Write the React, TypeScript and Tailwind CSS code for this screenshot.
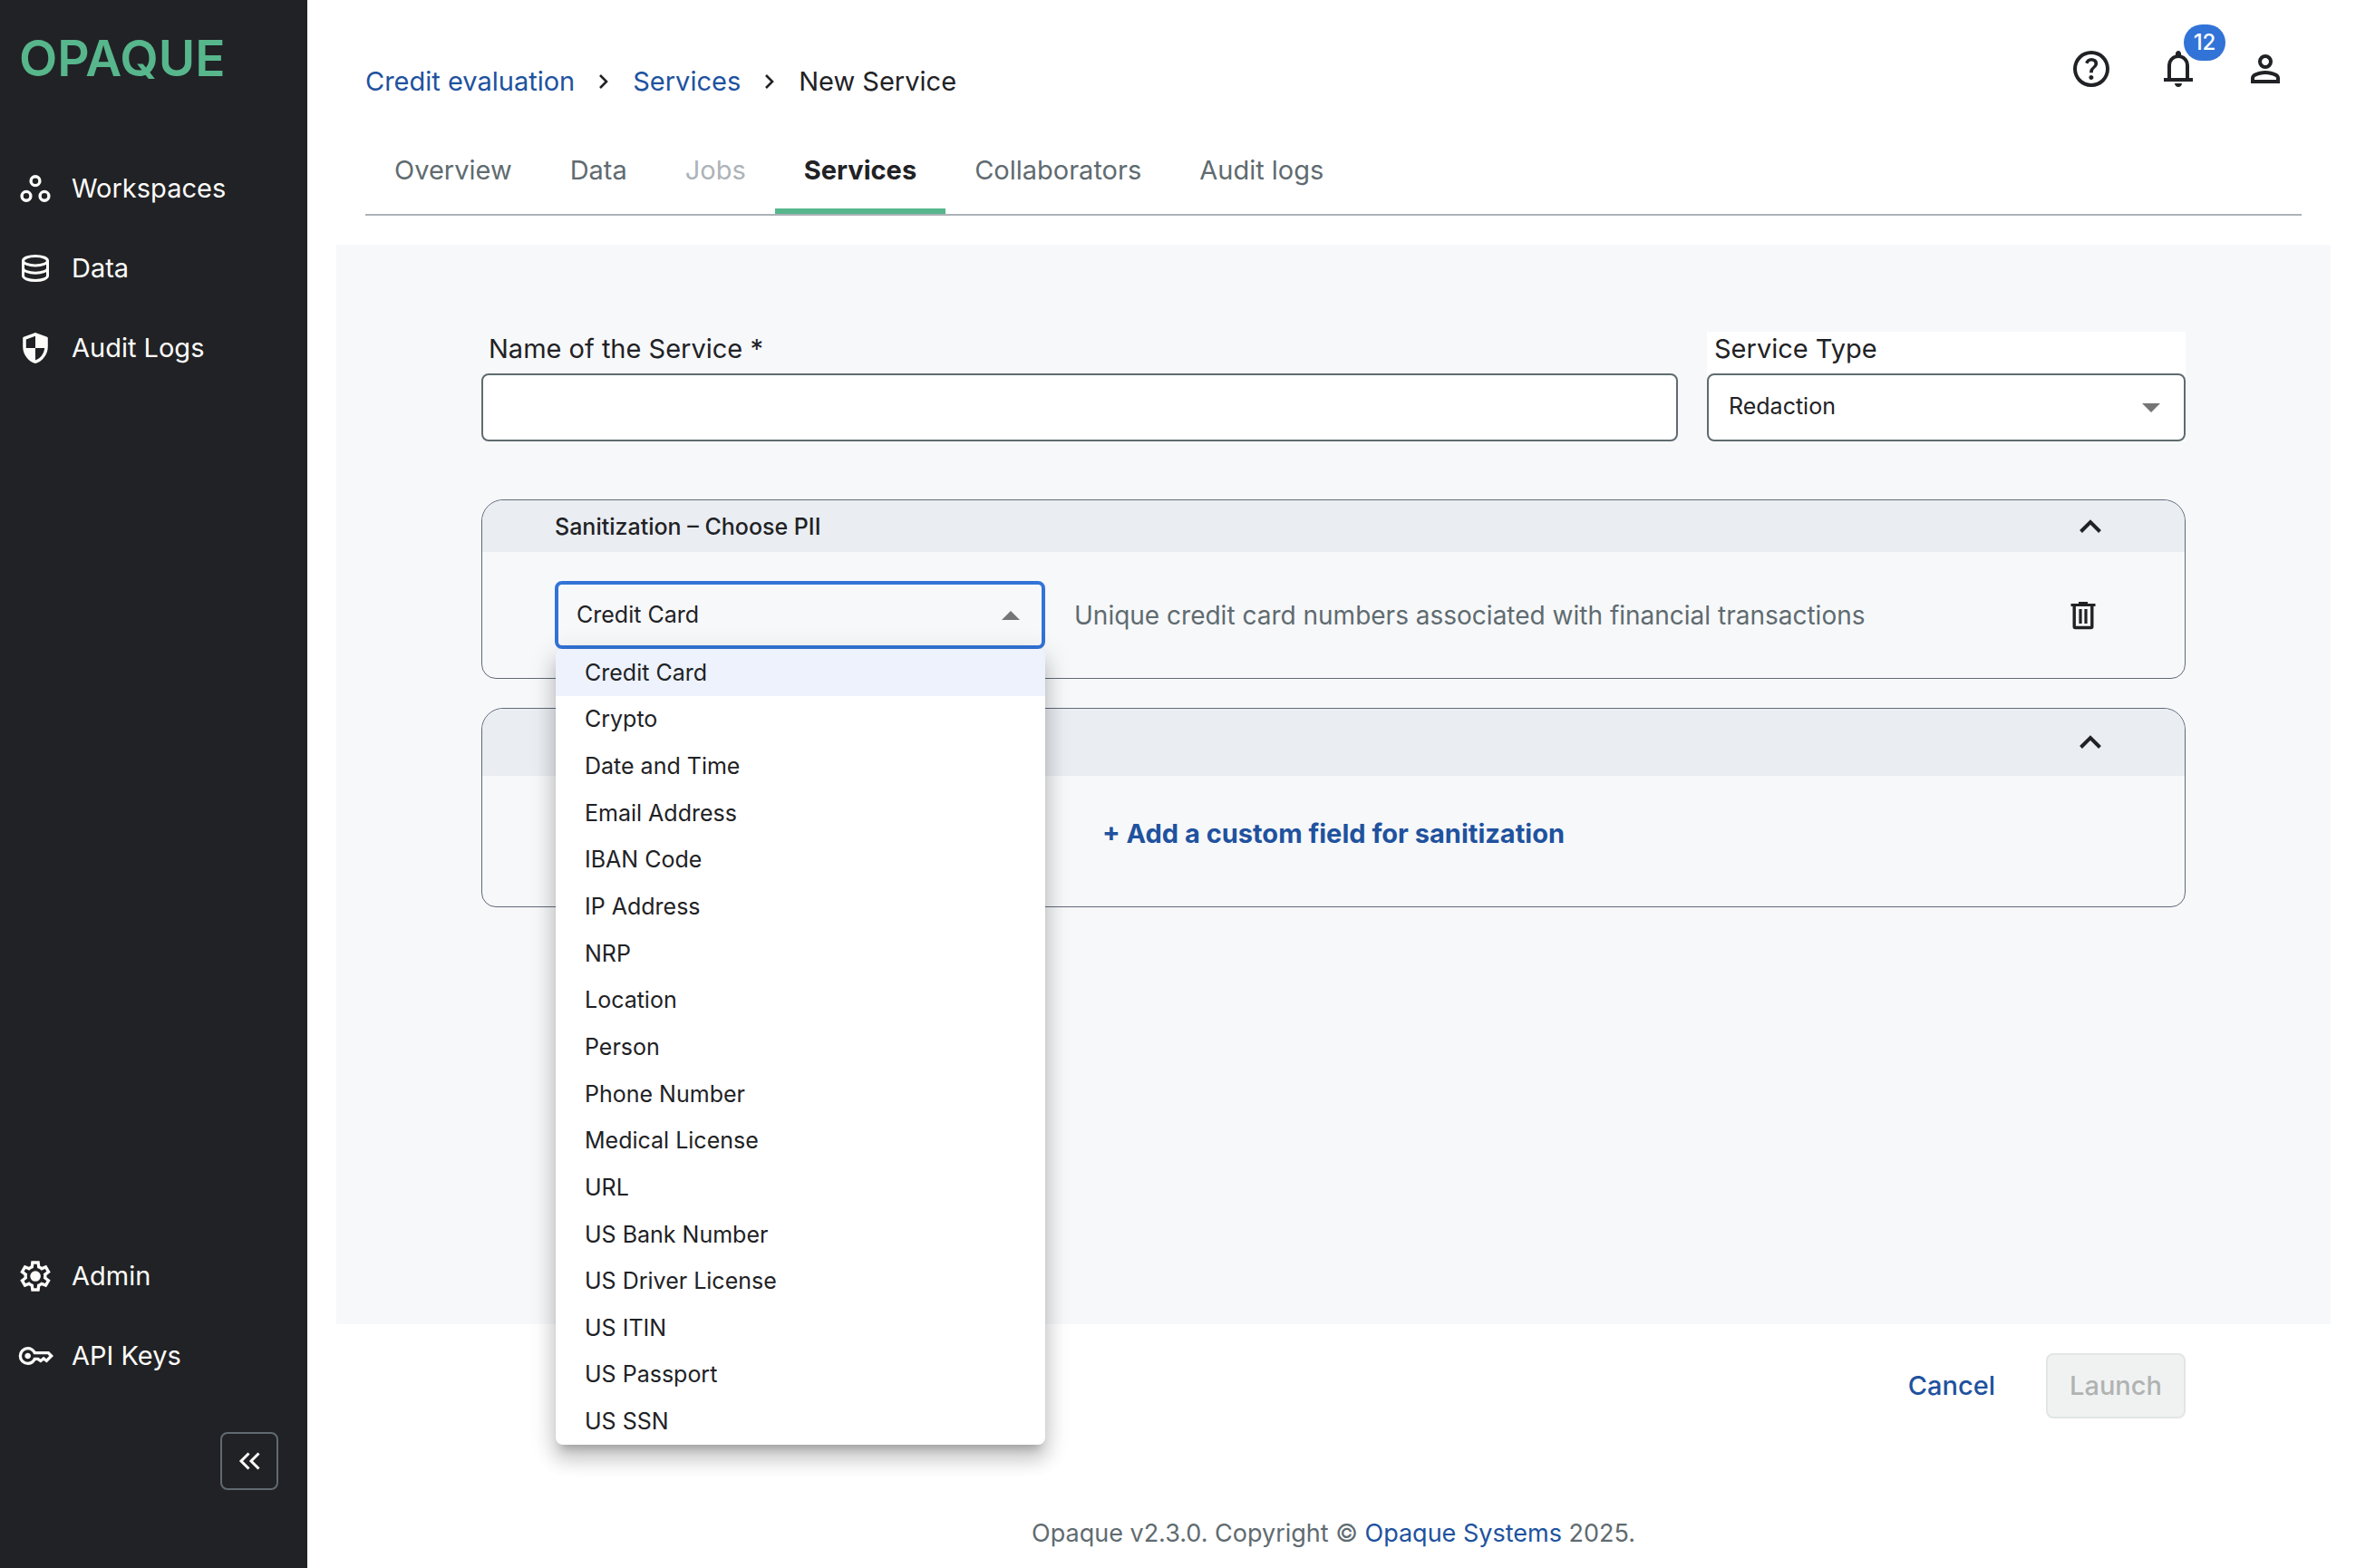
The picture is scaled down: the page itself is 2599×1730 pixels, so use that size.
import { useState } from 'react';
import type { ReactNode } from 'react';

const navItems = ['Workspaces', 'Data', 'Audit Logs'];

const tabs = ['Overview', 'Data', 'Jobs', 'Services', 'Collaborators', 'Audit logs'];

const piiTypes = [
    'Credit Card',
    'Crypto',
    'Date and Time',
    'Email Address',
    'IBAN Code',
    'IP Address',
    'NRP',
    'Location',
    'Person',
    'Phone Number',
    'Medical License',
    'URL',
    'US Bank Number',
    'US Driver License',
    'US ITIN',
    'US Passport',
    'US SSN',
];

// Material Symbols share one 960 unit grid
const symbols = {
    settings:
        'm370-80-16-128q-13-5-24.5-12T307-235l-119 50L78-375l103-78q-1-7-1-13.5v-27q0-6.5 1-13.5L78-585l110-190 119 50q11-8 23-15t24-12l16-128h220l16 128q13 5 24.5 12t22.5 15l119-50 110 190-103 78q1 7 1 13.5v27q0 6.5-2 13.5l103 78-110 190-118-50q-11 8-23 15t-24 12L590-80H370Zm70-80h79l14-106q31-8 57.5-23.5T639-327l99 41 39-68-86-65q5-14 7-29.5t2-31.5q0-16-2-31.5t-7-29.5l86-65-39-68-99 42q-22-23-48.5-38.5T533-694l-13-106h-79l-14 106q-31 8-57.5 23.5T321-633l-99-41-39 68 86 64q-5 15-7 30t-2 32q0 16 2 31t7 30l-86 65 39 68 99-42q22 23 48.5 38.5T427-266l13 106Zm42-180q58 0 99-41t41-99q0-58-41-99t-99-41q-59 0-99.5 41T342-480q0 58 40.5 99t99.5 41Z',
    key: 'M280-400q-33 0-56.5-23.5T200-480q0-33 23.5-56.5T280-560q33 0 56.5 23.5T360-480q0 33-23.5 56.5T280-400Zm0 160q-100 0-170-70T40-480q0-100 70-170t170-70q67 0 121.5 33t86.5 87h352l120 120-180 180-80-60-80 60-85-60h-47q-32 54-86.5 87T280-240Zm0-80q56 0 98.5-34t56.5-86h125l58 41 82-61 71 55 75-75-40-40H435q-14-52-56.5-86T280-640q-66 0-113 47t-47 113q0 66 47 113t113 47Z',
    help: 'M478-240q21 0 35.5-14.5T528-290q0-21-14.5-35.5T478-340q-21 0-35.5 14.5T428-290q0 21 14.5 35.5T478-240Zm-36-154h74q0-33 7.5-52t42.5-52q26-26 41-49.5t15-56.5q0-56-41-86t-97-30q-57 0-92.5 30T342-618l66 26q5-18 22.5-39t53.5-21q32 0 48 17.5t16 38.5q0 20-12 37.5T506-526q-44 39-54 59t-10 73Zm38 314q-83 0-156-31.5T197-197q-54-54-85.5-127T80-480q0-83 31.5-156T197-763q54-54 127-85.5T480-880q83 0 156 31.5T763-763q54 54 85.5 127T880-480q0 83-31.5 156T763-197q-54 54-127 85.5T480-80Zm0-80q134 0 227-93t93-227q0-134-93-227t-227-93q-134 0-227 93t-93 227q0 134 93 227t227 93Z',
    bell: 'M160-200v-80h80v-280q0-83 50-147.5T420-792v-28q0-25 17.5-42.5T480-880q25 0 42.5 17.5T540-820v28q80 20 130 84.5T720-560v280h80v80H160Zm320 120q-33 0-56.5-23.5T400-160h160q0 33-23.5 56.5T480-80ZM320-280h320v-280q0-66-47-113t-113-47q-66 0-113 47t-47 113v280Z',
    person: 'M480-480q-66 0-113-47t-47-113q0-66 47-113t113-47q66 0 113 47t47 113q0 66-47 113t-113 47ZM160-160v-112q0-34 17.5-62.5T224-378q62-31 126-46.5T480-440q66 0 130 15.5T736-378q29 15 46.5 43.5T800-272v112H160Zm80-80h480v-32q0-11-5.5-20T700-306q-54-27-109-40.5T480-360q-56 0-111 13.5T260-306q-9 5-14.5 14t-5.5 20v32Zm240-320q33 0 56.5-23.5T560-640q0-33-23.5-56.5T480-720q-33 0-56.5 23.5T400-640q0 33 23.5 56.5T480-560Z',
};

const Symbol = ({ name, className }: { name: keyof typeof symbols; className: string }) => (
    <svg viewBox="0 -960 960 960" fill="currentColor" className={className} aria-hidden="true">
        <path d={symbols[name]} />
    </svg>
);

const WorkspacesIcon = () => (
    <svg viewBox="0 0 40 40" fill="none" stroke="currentColor" strokeWidth="3.4" className="size-10" aria-hidden="true">
        <circle cx="20" cy="11.7" r="4.9" />
        <circle cx="10" cy="28.3" r="4.9" />
        <circle cx="30" cy="28.3" r="4.9" />
    </svg>
);

const DataIcon = () => (
    <svg viewBox="0 0 40 40" fill="none" stroke="currentColor" strokeWidth="3" className="size-10" aria-hidden="true">
        <ellipse cx="20" cy="11.7" rx="13.5" ry="5.2" />
        <path d="M6.5 11.7v16.6c0 2.9 6 5.2 13.5 5.2s13.5-2.3 13.5-5.2V11.7" />
        <path d="M6.5 20c0 2.9 6 5.2 13.5 5.2s13.5-2.3 13.5-5.2" />
    </svg>
);

const ShieldIcon = () => (
    <svg viewBox="0 0 40 40" fill="currentColor" fillRule="evenodd" className="size-10" aria-hidden="true">
        <path d="M20 3l13 4.8q.8.3.8 1.2v9.5C33.8 27 28 34.8 20 37 12 34.8 6.200 27 6.200 18.500V9q0-.9.8-1.200zM20 6.800L9.800 10.500V20H20zM20 20v13.500c5.600-2 9.500-7 10.200-13.500z" />
    </svg>
);

const TrashIcon = () => (
    <svg viewBox="0 0 40 40" fill="none" stroke="currentColor" className="size-10" aria-hidden="true">
        <path d="M6.5 8.500h27M15 6.500h10" strokeWidth="3.2" />
        <path d="M10.200 8v24.500q0 1 1 1h17.600q1 0 1-1V8" strokeWidth="3.4" />
        <path d="M17 13v16M23 13v16" strokeWidth="3.2" />
    </svg>
);

const ChevronUp = () => (
    <svg viewBox="0 0 32 32" fill="none" stroke="currentColor" strokeWidth="4" className="size-8" aria-hidden="true">
        <path d="M5.500 21.500L16 11l10.500 10.500" />
    </svg>
);

const Crumb = () => (
    <svg viewBox="0 0 16 24" fill="none" stroke="#212225" strokeWidth="2.6" className="mx-6 h-6 w-4" aria-hidden="true">
        <path d="M4 5l7 7-7 7" />
    </svg>
);

const Caret = ({ up }: { up?: boolean }) => (
    <svg viewBox="0 0 20 10" fill="#757575" className="pointer-events-none absolute right-7 h-[10px] w-5" aria-hidden="true">
        <path d={up ? 'M0 10L10 0l10 10z' : 'M0 0l10 10L20 0z'} />
    </svg>
);

const NavLink = ({ icon, children }: { icon: ReactNode; children: ReactNode }) => (
    <a href="#" className="flex h-12 items-center gap-5 text-[29px] leading-10">
        {icon}
        {children}
    </a>
);

const navIcons = [<WorkspacesIcon />, <DataIcon />, <ShieldIcon />];

const Sidebar = () => (
    <aside className="flex w-[339px] shrink-0 flex-col bg-[#212225] pl-[19px] text-[#fdfcfa]">
        <div className="px-0.5 pt-8 text-[55px] leading-[64px] font-semibold text-[#57b68c]">OPAQUE</div>
        <nav className="mt-22 flex flex-col gap-10">
            {navItems.map((item, i) => (
                <NavLink key={item} icon={navIcons[i]}>{item}</NavLink>
            ))}
        </nav>
        <nav className="mt-auto flex flex-col gap-10">
            <NavLink icon={<Symbol name="settings" className="size-10" />}>Admin</NavLink>
            <NavLink icon={<Symbol name="key" className="size-10" />}>API Keys</NavLink>
        </nav>
        <button
            type="button"
            aria-label="Collapse sidebar"
            className="mt-15 mr-8 mb-[86px] flex size-16 items-center justify-center self-end rounded-lg border-2 border-[#5f6b70]"
        >
            <svg viewBox="0 0 24 24" fill="none" stroke="currentColor" strokeWidth="3" className="size-6" aria-hidden="true">
                <path d="M11.500 3.500L3 12l8.500 8.500M22.500 3.500L14 12l8.500 8.500" />
            </svg>
        </button>
    </aside>
);

const Header = () => (
    <header className="mx-8 flex items-start justify-between pt-[52px]">
        <nav aria-label="Breadcrumb" className="flex items-center pt-[18px] text-[29px] leading-10">
            <a href="#" className="text-[#20529e]">Credit evaluation</a>
            <Crumb />
            <a href="#" className="text-[#20529e]">Services</a>
            <Crumb />
            <span>New Service</span>
        </nav>
        <div className="flex gap-12 pr-4">
            <button type="button" aria-label="Help">
                <Symbol name="help" className="size-12" />
            </button>
            <button type="button" aria-label="Notifications" className="relative">
                <Symbol name="bell" className="size-12" />
                <span className="absolute -top-[25px] left-[30px] flex h-10 w-[46px] items-center justify-center rounded-full bg-[#3273d8] text-[24px] font-medium text-white">
                    12
                </span>
            </button>
            <button type="button" aria-label="Account">
                <Symbol name="person" className="size-12" />
            </button>
        </div>
    </header>
);

const App = () => {
    const [name, setName] = useState('');
    const [serviceType, setServiceType] = useState('Redaction');
    const [pii, setPii] = useState('Credit Card');

    return (
        <div className="flex min-h-screen bg-white font-['Inter',sans-serif] text-[#212225]">
            <Sidebar />
            <main className="flex min-w-0 flex-1 flex-col pr-7 pl-8">
                <Header />

                <div role="tablist" className="mx-8 mt-[58px] flex border-b-2 border-[#adb3b8] text-[29px] leading-10">
                    {tabs.map((tab) => (
                        <button
                            key={tab}
                            type="button"
                            role="tab"
                            aria-selected={tab === 'Services'}
                            disabled={tab === 'Jobs'}
                            className={
                                tab === 'Services'
                                    ? 'border-b-[6px] border-[#57b68c] px-8 pb-[22px] font-bold'
                                    : 'px-8 pb-7 text-[#5f6b70] disabled:text-[#adb3b8]'
                            }
                        >
                            {tab}
                        </button>
                    ))}
                </div>

                <section className="mt-8 flex-1 bg-[#f7f8fa] px-40 pt-24">
                    <div className="flex gap-8">
                        <div className="flex flex-5 flex-col">
                            <label htmlFor="service-name" className="px-2 pb-2 text-[29px] leading-[38px]">Name of the Service *</label>
                            <input
                                id="service-name"
                                required
                                className="h-[75px] w-full rounded-lg border-2 border-[#5f6b70] bg-white px-6 text-[25px] outline-none"
                                value={name}
                                onChange={(e) => setName(e.target.value)}
                            />
                        </div>
                        <div className="flex flex-2 flex-col bg-white">
                            <label htmlFor="service-type" className="px-2 pb-2 text-[29px] leading-[38px]">Service Type</label>
                            <div className="relative flex items-center">
                                <select
                                    id="service-type"
                                    className="h-[75px] w-full appearance-none rounded-lg border-2 border-[#5f6b70] bg-white px-[22px] pb-0.5 text-[25px] outline-none"
                                    value={serviceType}
                                    onChange={(e) => setServiceType(e.target.value)}
                                >
                                    <option>Redaction</option>
                                </select>
                                <Caret />
                            </div>
                        </div>
                    </div>

                    <div className="mt-16 rounded-t-3xl rounded-b-2xl border border-[#5f6b78]">
                        <div className="flex h-[57px] items-center justify-between rounded-t-3xl bg-[#eaedf2] pr-[88px] pl-20">
                            <h2 className="text-[25px] leading-10 font-medium">Sanitization – Choose PII</h2>
                            <button type="button" aria-label="Collapse section">
                                <ChevronUp />
                            </button>
                        </div>
                        <div className="flex items-center px-20 py-8">
                            <div className="relative flex w-[541px] items-center">
                                <select
                                    aria-label="PII type"
                                    className="h-[75px] w-full appearance-none rounded-lg border-4 border-[#3273d8] px-5 text-[25px] outline-none"
                                    value={pii}
                                    onChange={(e) => setPii(e.target.value)}
                                >
                                    {piiTypes.map((type) => (
                                        <option key={type}>{type}</option>
                                    ))}
                                </select>
                                <Caret up />
                                <ul
                                    role="listbox"
                                    aria-label="PII types"
                                    className="absolute top-full right-0 left-px z-10 flex h-[878px] flex-col overflow-hidden rounded-lg bg-white shadow-[0_10px_10px_-6px_rgba(0,0,0,0.2),0_16px_20px_2px_rgba(0,0,0,0.14),0_6px_28px_4px_rgba(0,0,0,0.12)]"
                                >
                                    {piiTypes.map((type) => (
                                        <li
                                            key={type}
                                            role="option"
                                            aria-selected={type === pii}
                                            onClick={() => setPii(type)}
                                            className="flex flex-1 items-center px-8 text-[25px] leading-10 aria-selected:bg-[#edf2fc]"
                                        >
                                            {type}
                                        </li>
                                    ))}
                                </ul>
                            </div>
                            <p className="pl-8 text-[28px] leading-10 text-[#5f6b70]">
                                Unique credit card numbers associated with financial transactions
                            </p>
                            <button type="button" aria-label="Delete" className="mr-3 ml-auto">
                                <TrashIcon />
                            </button>
                        </div>
                    </div>

                    <div className="mt-8 rounded-t-3xl rounded-b-2xl border border-[#5f6b78]">
                        <div className="flex h-[74px] items-center justify-end rounded-t-3xl bg-[#eaedf2] pr-[88px]">
                            <button type="button" aria-label="Collapse section">
                                <ChevronUp />
                            </button>
                        </div>
                        <div className="flex h-36 items-start justify-center pt-11">
                            <button type="button" className="text-[29px] leading-10 font-bold text-[#20529e]">
                                + Add a custom field for sanitization
                            </button>
                        </div>
                    </div>
                </section>

                <div className="mr-40 flex items-center justify-end gap-14 pt-8 text-[29px] leading-10 font-medium">
                    <button type="button" className="text-[#20529e]">Cancel</button>
                    <button
                        type="button"
                        disabled
                        className="h-18 rounded-lg border-2 border-[#e1e6e5] bg-[#f0f2f2] px-6 text-[#b0b3b2]"
                    >
                        Launch
                    </button>
                </div>

                <footer className="pt-[107px] pb-[18px] text-center text-[27px] leading-10 text-[#5f6b70]">
                    Opaque v2.3.0. Copyright © <a href="#" className="text-[#20529e]">Opaque Systems</a> 2025.
                </footer>
            </main>
        </div>
    );
};

export default App;
